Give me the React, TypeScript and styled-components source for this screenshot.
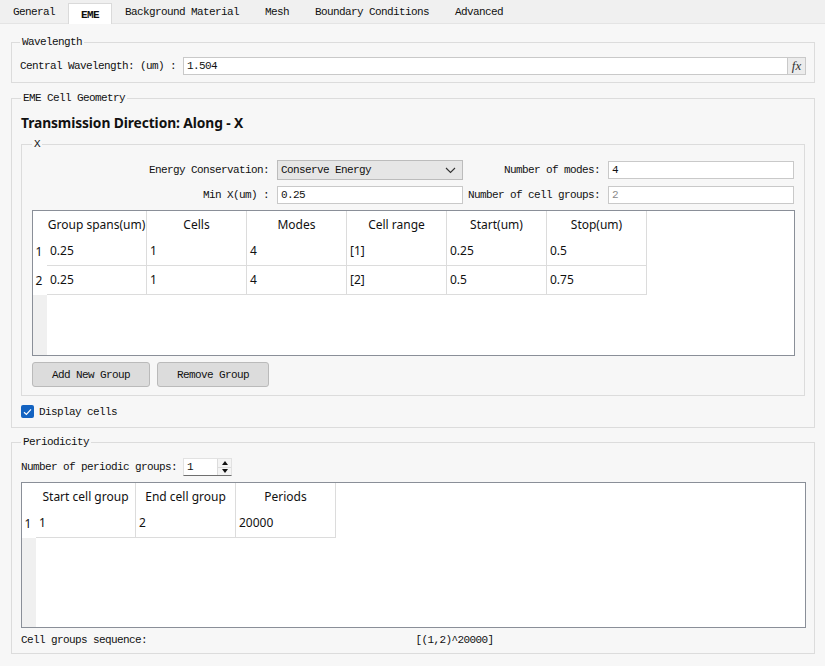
import styled, { createGlobalStyle } from "styled-components";

const GlobalStyle = createGlobalStyle`
  html, body {
    margin: 0;
    padding: 0;
    background: #f7f7f7;
  }
  body {
    font-family: "Liberation Mono", "DejaVu Sans Mono", monospace;
    font-size: 11px;
    letter-spacing: -0.6px;
    color: #111;
  }
  * {
    box-sizing: border-box;
  }
`;

const tabs = ["General", "EME", "Background Material", "Mesh", "Boundary Conditions", "Advanced"];

const cellColumns = ["Group spans(um)", "Cells", "Modes", "Cell range", "Start(um)", "Stop(um)"];
const cellRows = [
  ["0.25", "1", "4", "[1]", "0.25", "0.5"],
  ["0.25", "1", "4", "[2]", "0.5", "0.75"],
];

const periodColumns = ["Start cell group", "End cell group", "Periods"];
const periodRows = [["1", "2", "20000"]];

type DataTableProps = {
  columns: string[];
  rows: string[][];
};

const DataTable = ({ columns, rows }: DataTableProps) => {
  return (
    <TableFrame>
      <GridRow cols={columns.length}>
        <RowHead />
        {columns.map((c) => (
          <HeadCell key={c}>{c}</HeadCell>
        ))}
      </GridRow>
      {rows.map((r, i) => (
        <GridRow cols={columns.length} key={i} body>
          <RowHead>{i + 1}</RowHead>
          {r.map((v, j) => (
            <BodyCell key={j}>{v}</BodyCell>
          ))}
        </GridRow>
      ))}
      <TableFill />
    </TableFrame>
  );
};

const App = () => {
  return (
    <Page>
      <GlobalStyle />
      <TabBar>
        {tabs.map((t) => (
          <Tab key={t} active={t === "EME"}>
            {t}
          </Tab>
        ))}
      </TabBar>

      <Content>
        <Group pad="8px 8px 7px 8px">
          <Legend>Wavelength</Legend>
          <FieldRow gap={7}>
            <span>Central Wavelength: (um) :</span>
            <ExprField>
              <ExprValue>1.504</ExprValue>
              <FxButton>fx</FxButton>
            </ExprField>
          </FieldRow>
        </Group>

        <Group pad="9px 9px 9px 9px" top={8}>
          <Legend>EME Cell Geometry</Legend>
          <Heading>Transmission Direction: Along - X</Heading>

          <Group pad="9px 9px 8px 10px" inner>
            <Legend>X</Legend>
            <FormGrid>
              <FormLabel>Energy Conservation:</FormLabel>
              <Combo>
                <span>Conserve Energy</span>
                <svg width="11" height="7" viewBox="0 0 11 7">
                  <path d="M1 1 L5.5 5.5 L10 1" fill="none" stroke="#333" strokeWidth="1.1" />
                </svg>
              </Combo>
              <FormLabel>Number of modes:</FormLabel>
              <TextField>4</TextField>

              <FormLabel>Min X(um) :</FormLabel>
              <TextField>0.25</TextField>
              <FormLabel>Number of cell groups:</FormLabel>
              <TextField disabled>2</TextField>
            </FormGrid>

            <TableSlot>
              <DataTable columns={cellColumns} rows={cellRows} />
            </TableSlot>

            <ButtonRow>
              <Button>Add New Group</Button>
              <Button>Remove Group</Button>
            </ButtonRow>
          </Group>

          <CheckRow>
            <CheckBox>
              <svg width="9" height="8" viewBox="0 0 9 8">
                <path d="M1 4.2 L3.4 6.4 L8 1.4" fill="none" stroke="#fff" strokeWidth="1.2" />
              </svg>
            </CheckBox>
            <span>Display cells</span>
          </CheckRow>
        </Group>

        <Group pad="9px 8px 6px 9px" top={7}>
          <Legend>Periodicity</Legend>
          <FieldRow gap={6}>
            <span>Number of periodic groups:</span>
            <SpinBox>
              <SpinValue>1</SpinValue>
              <SpinButtons>
                <SpinArrow up />
                <SpinArrow />
              </SpinButtons>
            </SpinBox>
          </FieldRow>

          <TableSlot>
            <DataTable columns={periodColumns} rows={periodRows} />
          </TableSlot>

          <Sequence>
            <span>Cell groups sequence:</span>
            <SequenceValue>[(1,2)^20000]</SequenceValue>
          </Sequence>
        </Group>
      </Content>
    </Page>
  );
};

export default App;

const Page = styled.div`
  width: 825px;
  height: 666px;
  overflow: hidden;
  background: #f7f7f7;
`;

const TabBar = styled.div`
  display: flex;
  height: 24px;
  background: #f0f0f0;
  border-bottom: 1px solid #e4e4e4;
`;

const Tab = styled.div<{ active?: boolean }>`
  display: flex;
  align-items: center;
  padding: ${({ active }) => (active ? "1px 12px 0" : "0 13px")};
  margin-top: ${({ active }) => (active ? "3px" : "0")};
  margin-bottom: ${({ active }) => (active ? "-1px" : "0")};
  background: ${({ active }) => (active ? "#fff" : "transparent")};
  border: ${({ active }) => (active ? "1px solid #dadada" : "none")};
  border-bottom: none;
  font-weight: ${({ active }) => (active ? 700 : 400)};
  white-space: nowrap;
`;

const Content = styled.div`
  padding-top: 11px;
`;

const Group = styled.fieldset<{ pad: string; top?: number; inner?: boolean }>`
  margin: ${({ top, inner }) => (inner ? "0" : `${top ?? 0}px 10px 0 11px`)};
  padding: ${({ pad }) => pad};
  border: 1px solid #dcdcdc;
  min-width: 0;
`;

const Legend = styled.legend`
  padding: 0 2px;
  margin-left: 0;
  line-height: 14px;
  height: 14px;
`;

const FieldRow = styled.div<{ gap: number }>`
  display: flex;
  align-items: center;
  gap: ${({ gap }) => gap}px;
  white-space: nowrap;
`;

const ExprField = styled.div`
  flex: 1;
  display: flex;
  height: 18px;
  background: #fff;
  border: 1px solid #c9c9c9;
`;

const ExprValue = styled.div`
  flex: 1;
  padding-left: 3px;
  line-height: 16px;
`;

const FxButton = styled.div`
  width: 18px;
  background: #ececec;
  border-left: 1px solid #c9c9c9;
  font-family: "Liberation Serif", "DejaVu Serif", serif;
  font-style: italic;
  font-size: 13px;
  letter-spacing: 0;
  line-height: 16px;
  text-align: center;
  color: #333;
`;

const Heading = styled.div`
  font-family: "Noto Sans", "Open Sans", sans-serif;
  font-size: 13.8px;
  font-weight: 700;
  letter-spacing: -0.1px;
  line-height: 18px;
  color: #111;
  margin-bottom: 5px;
`;

const FormGrid = styled.div`
  display: grid;
  grid-template-columns: 1fr 186px 129px 186px;
  grid-template-rows: 20px 18px;
  column-gap: 8px;
  row-gap: 6px;
  padding-right: 1px;
  align-items: center;
`;

const FormLabel = styled.div`
  justify-self: end;
  white-space: nowrap;
`;

const Combo = styled.div`
  height: 20px;
  display: flex;
  align-items: center;
  justify-content: space-between;
  padding: 0 6px 0 3px;
  background: #e6e6e6;
  border: 1px solid #bcbcbc;

  svg {
    display: block;
  }
`;

const TextField = styled.div<{ disabled?: boolean }>`
  height: 18px;
  line-height: 16px;
  padding-left: 3px;
  background: #fff;
  border: 1px solid #c9c9c9;
  color: ${({ disabled }) => (disabled ? "#8a8a8a" : "#111")};
`;

const TableSlot = styled.div`
  margin-top: 6px;
`;

const TableFrame = styled.div`
  height: 146px;
  display: flex;
  flex-direction: column;
  background: #fff;
  border: 1px solid #8a8f98;
  overflow: hidden;
  font-family: "Noto Sans", "Open Sans", sans-serif;
  font-size: 12px;
  letter-spacing: 0;
  color: #111;
`;

const GridRow = styled.div<{ cols: number; body?: boolean }>`
  display: grid;
  grid-template-columns: 14px repeat(${({ cols }) => cols}, 100px);
  height: ${({ body }) => (body ? "29px" : "26px")};
  flex-shrink: 0;
`;

const RowHead = styled.div`
  display: flex;
  align-items: center;
  justify-content: center;
  padding-right: 2px;
`;

const HeadCell = styled.div`
  display: flex;
  align-items: center;
  justify-content: center;
  overflow: hidden;
  white-space: nowrap;
  border-right: 1px solid #dcdcdc;
`;

const BodyCell = styled.div`
  display: flex;
  align-items: center;
  padding-left: 3px;
  padding-bottom: 1px;
  border-right: 1px solid #dcdcdc;
  border-bottom: 1px solid #dcdcdc;
`;

const TableFill = styled.div`
  flex: 1;
  background: linear-gradient(to right, #f0f0f0 14px, #fff 14px);
`;

const ButtonRow = styled.div`
  display: flex;
  gap: 7px;
  margin-top: 6px;
`;

const Button = styled.div`
  height: 25px;
  display: flex;
  align-items: center;
  padding: 0 19px;
  background: #dcdcdc;
  border: 1px solid #bababa;
  border-radius: 3px;
  white-space: nowrap;
`;

const CheckRow = styled.div`
  display: flex;
  align-items: center;
  gap: 5px;
  margin-top: 9px;
  height: 13px;
`;

const CheckBox = styled.div`
  width: 13px;
  height: 13px;
  border-radius: 2px;
  background: #1463c1;
  display: flex;
  align-items: center;
  justify-content: center;
`;

const SpinBox = styled.div`
  display: flex;
  width: 49px;
  height: 18px;
  background: #fff;
  border: 1px solid #e2e2e2;
  border-bottom-color: #6f6f6f;
`;

const SpinValue = styled.div`
  flex: 1;
  padding-left: 3px;
  line-height: 16px;
`;

const SpinButtons = styled.div`
  width: 14px;
  display: flex;
  flex-direction: column;
  background: #f4f4f4;
  border-left: 1px solid #dcdcdc;
`;

const SpinArrow = styled.div<{ up?: boolean }>`
  flex: 1;
  display: flex;
  align-items: center;
  justify-content: center;
  border-bottom: ${({ up }) => (up ? "1px solid #dcdcdc" : "none")};

  &::after {
    content: "";
    border-left: 3px solid transparent;
    border-right: 3px solid transparent;
    ${({ up }) => (up ? "border-bottom: 4px solid #111;" : "border-top: 4px solid #111;")}
  }
`;

const Sequence = styled.div`
  display: grid;
  grid-template-columns: 1fr 1fr;
  margin-top: 5px;
  line-height: 14px;
`;

const SequenceValue = styled.span`
  padding-left: 2px;
`;
